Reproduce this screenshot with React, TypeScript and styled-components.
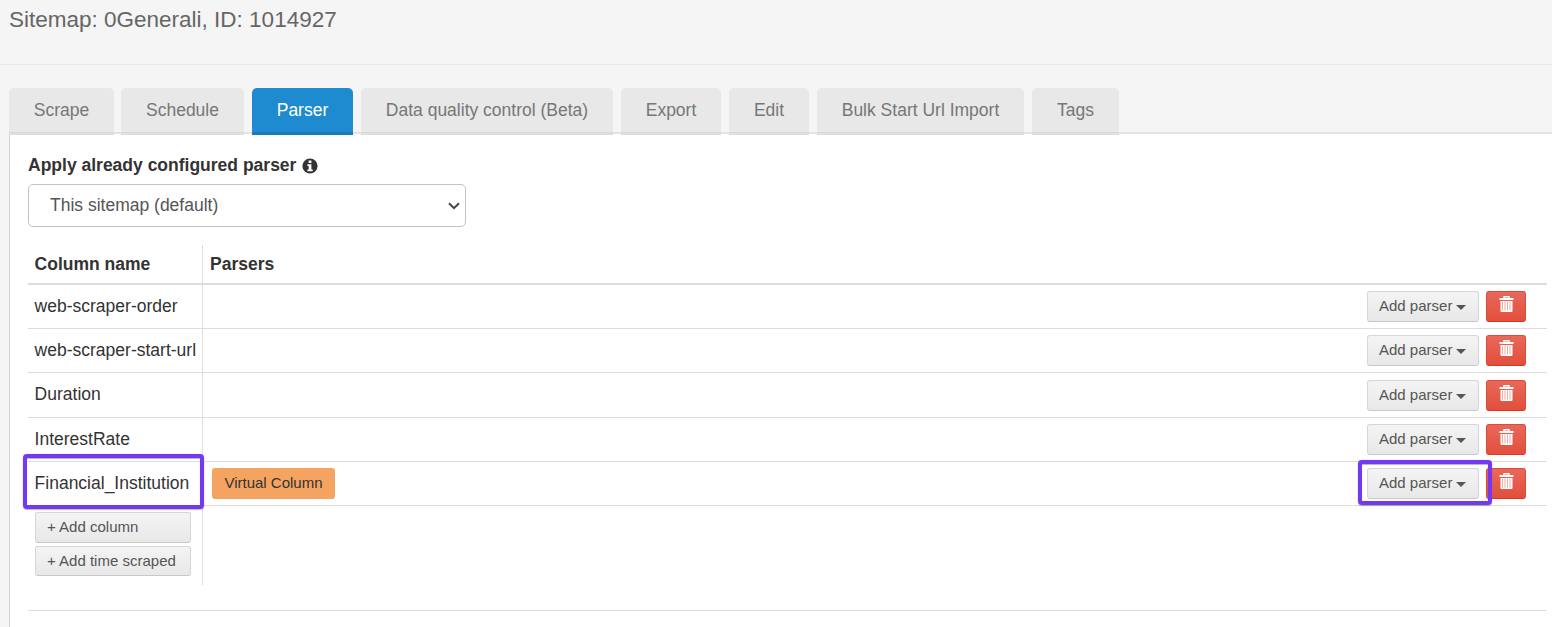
import React from "react";
import styled, { createGlobalStyle } from "styled-components";

const GlobalStyle = createGlobalStyle`
  * { box-sizing: border-box; }
  body {
    margin: 0;
    background: #f5f5f5;
    color: #333;
    font-family: "Liberation Sans", Arial, sans-serif;
    font-size: 17.5px;
    line-height: 25px;
  }
`;

const Page = styled.div`
  width: 100%;
  height: 627px;
  overflow: hidden;
`;

const PageHeader = styled.header`
  height: 65px;
  padding: 5px 9px 0;
  border-bottom: 1px solid #e7e7e7;
`;

const Title = styled.h1`
  margin: 0;
  font-size: 22.5px;
  font-weight: 400;
  line-height: 30px;
  color: #666;
`;

const Tabs = styled.nav`
  position: relative;
  z-index: 1;
  display: flex;
  height: 46px;
  margin: 23px 0 0 9px;
  border-bottom: 2px solid #e3e3e3;
`;

const Tab = styled.a<{ $active?: boolean; $width: number; $gap: number }>`
  flex: none;
  width: ${(p) => p.$width}px;
  height: 47px;
  margin-right: ${(p) => p.$gap}px;
  padding-top: 10px;
  border-radius: 5px 5px 0 0;
  text-align: center;
  color: ${(p) => (p.$active ? "#fff" : "#777")};
  background: ${(p) => (p.$active ? "#1e8bd1" : "#e8e8e8")};
  box-shadow: inset 0 -2px 0 ${(p) => (p.$active ? "#1a7bba" : "#dfdfdf")},
    inset 0 -3px 0 ${(p) => (p.$active ? "#1a7bba" : "#d8d8d8")};
`;

const Panel = styled.main`
  height: 493px;
  margin-left: 9px;
  padding: 19px 5px 0 18px;
  border-left: 1px solid #d2d2d2;
  background: #fff;
`;

const FieldLabel = styled.label`
  display: flex;
  align-items: center;
  gap: 6px;
  height: 25px;
  font-weight: 700;
`;

const Select = styled.div`
  display: flex;
  align-items: center;
  justify-content: space-between;
  width: 438px;
  height: 43px;
  margin-top: 6px;
  padding: 0 5px 1px 21px;
  border: 1px solid #c3c3c3;
  border-radius: 5px;
  color: #555;

  svg {
    margin-top: 2px;
  }
`;

const Table = styled.div`
  margin-top: 18px;
  width: 1519px;
`;

const Row = styled.div<{ $height: number; $line?: string }>`
  display: flex;
  height: ${(p) => p.$height}px;
  border-bottom: ${(p) => p.$line ?? "1px solid #ddd"};
`;

const HeadRow = styled(Row)`
  font-weight: 700;
`;

const NameCell = styled.div`
  position: relative;
  flex: none;
  width: 175px;
  padding: 9px 0 0 6.6px;
  border-right: 1px solid #ddd;
  white-space: nowrap;
`;

const HeadNameCell = styled(NameCell)`
  padding-top: 7px;
`;

const ParserCell = styled.div`
  flex: 1;
  display: flex;
  align-items: center;
  padding-left: 7px;
`;

const Actions = styled.div`
  position: relative;
  flex: none;
  display: flex;
  align-items: center;
  gap: 7px;
  padding-right: 21px;
`;

const GreyButton = styled.button<{ $width: number; $height?: number }>`
  display: flex;
  align-items: center;
  gap: 4px;
  width: ${(p) => p.$width}px;
  height: ${(p) => p.$height ?? 31}px;
  padding: 0 0 2px 11px;
  border: 1px solid #d6d6d6;
  border-bottom-color: #c9c9c9;
  border-radius: 3px;
  background: linear-gradient(#f4f4f4, #e8e8e8);
  color: #555;
  font: 15px "Liberation Sans", Arial, sans-serif;
`;

const Caret = styled.span`
  margin-top: 4px;
  border: 5px solid transparent;
  border-top-color: #555;
  border-bottom: 0;
`;

const DeleteButton = styled.button`
  display: flex;
  justify-content: center;
  width: 40px;
  height: 31px;
  padding: 4px 0 0;
  border: 1px solid #e04b38;
  border-bottom-color: #dd3520;
  border-radius: 3px;
  background: linear-gradient(#e8685a, #e24f3c);
`;

const Tag = styled.span`
  display: flex;
  align-items: center;
  justify-content: center;
  width: 123px;
  height: 31px;
  margin-left: 2px;
  padding-bottom: 2px;
  border-radius: 3px;
  background: #f4a460;
  font-size: 15px;
`;

const AddCell = styled(NameCell)`
  display: flex;
  flex-direction: column;
  gap: 3px;
  padding: 6px 0 0 7px;
`;

const Highlight = styled.span<{ $left: number; $top: number; $width: number; $height: number }>`
  position: absolute;
  z-index: 2;
  left: ${(p) => p.$left}px;
  top: ${(p) => p.$top}px;
  width: ${(p) => p.$width}px;
  height: ${(p) => p.$height}px;
  border: 4px solid #7239ee;
  border-radius: 4px;
  box-shadow: 0 0 1px #8d80a8, 0 1px 1px rgba(0, 0, 0, 0.25), inset 0 1px 1px rgba(0, 0, 0, 0.3);
  pointer-events: none;
`;

const Divider = styled.hr`
  margin: 25px 0 0;
  width: 1519px;
  border: 0;
  border-top: 1px solid #ddd;
`;

const InfoIcon = () => (
  <svg width="16" height="16" viewBox="0 0 16 16">
    <circle cx="8" cy="8" r="7.6" fill="#333" />
    <path d="M6.6 2.6H9.4V5H6.6ZM5.4 6.2H9.4V11.4H10.7V13.2H5.4V11.4H6.7V8H5.4Z" fill="#fff" />
  </svg>
);

const TrashIcon = () => (
  <svg width="15" height="17" viewBox="0 0 15 17" fill="none">
    <path d="M5 2.5V0.75H10V2.5" stroke="#fff" strokeWidth="1.4" />
    <path d="M0.5 2H14.5V4H0.5Z" fill="#fff" />
    <path d="M1.5 5H13.5V15Q13.5 16 12.5 16H2.5Q1.5 16 1.5 15Z" fill="#fff" />
    <path d="M3.5 5.5V14.5M8.5 5.5V14.5" stroke="#f0ad91" />
    <path d="M6 5.5V14.5M11 5.5V14.5" stroke="#eba6ae" />
  </svg>
);

const tabs = [
  { label: "Scrape", width: 105, gap: 7 },
  { label: "Schedule", width: 123, gap: 8 },
  { label: "Parser", width: 101, gap: 8, active: true },
  { label: "Data quality control (Beta)", width: 252, gap: 8 },
  { label: "Export", width: 100, gap: 8 },
  { label: "Edit", width: 80, gap: 8 },
  { label: "Bulk Start Url Import", width: 207, gap: 8 },
  { label: "Tags", width: 87, gap: 0 },
];

const columns = [
  { name: "web-scraper-order", height: 44 },
  { name: "web-scraper-start-url", height: 44 },
  { name: "Duration", height: 45 },
  { name: "InterestRate", height: 44 },
  { name: "Financial_Institution", height: 44, virtual: true },
];

export default function App() {
  return (
    <Page>
      <GlobalStyle />
      <PageHeader>
        <Title>Sitemap: 0Generali, ID: 1014927</Title>
      </PageHeader>
      <Tabs>
        {tabs.map((t) => (
          <Tab key={t.label} $active={t.active} $width={t.width} $gap={t.gap}>
            {t.label}
          </Tab>
        ))}
      </Tabs>
      <Panel>
        <FieldLabel>
          Apply already configured parser
          <InfoIcon />
        </FieldLabel>
        <Select>
          This sitemap (default)
          <svg width="12" height="8" viewBox="0 0 12 8" fill="none">
            <path d="M1 1.2L6 6.2L11 1.2" stroke="#444" strokeWidth="2" />
          </svg>
        </Select>
        <Table>
          <HeadRow $height={40} $line="2px solid #ddd">
            <HeadNameCell>Column name</HeadNameCell>
            <ParserCell>Parsers</ParserCell>
          </HeadRow>
          {columns.map((c) => (
            <Row key={c.name} $height={c.height}>
              <NameCell>
                {c.name}
                {c.virtual && <Highlight $left={-5} $top={-8} $width={181} $height={55} />}
              </NameCell>
              <ParserCell>{c.virtual && <Tag>Virtual Column</Tag>}</ParserCell>
              <Actions>
                <GreyButton $width={112}>
                  Add parser
                  <Caret />
                </GreyButton>
                <DeleteButton aria-label="Delete">
                  <TrashIcon />
                </DeleteButton>
                {c.virtual && <Highlight $left={-9} $top={-2} $width={134} $height={45} />}
              </Actions>
            </Row>
          ))}
          <Row $height={79} $line="0">
            <AddCell>
              <GreyButton $width={156}>+ Add column</GreyButton>
              <GreyButton $width={156} $height={30}>+ Add time scraped</GreyButton>
            </AddCell>
          </Row>
        </Table>
        <Divider />
      </Panel>
    </Page>
  );
}
